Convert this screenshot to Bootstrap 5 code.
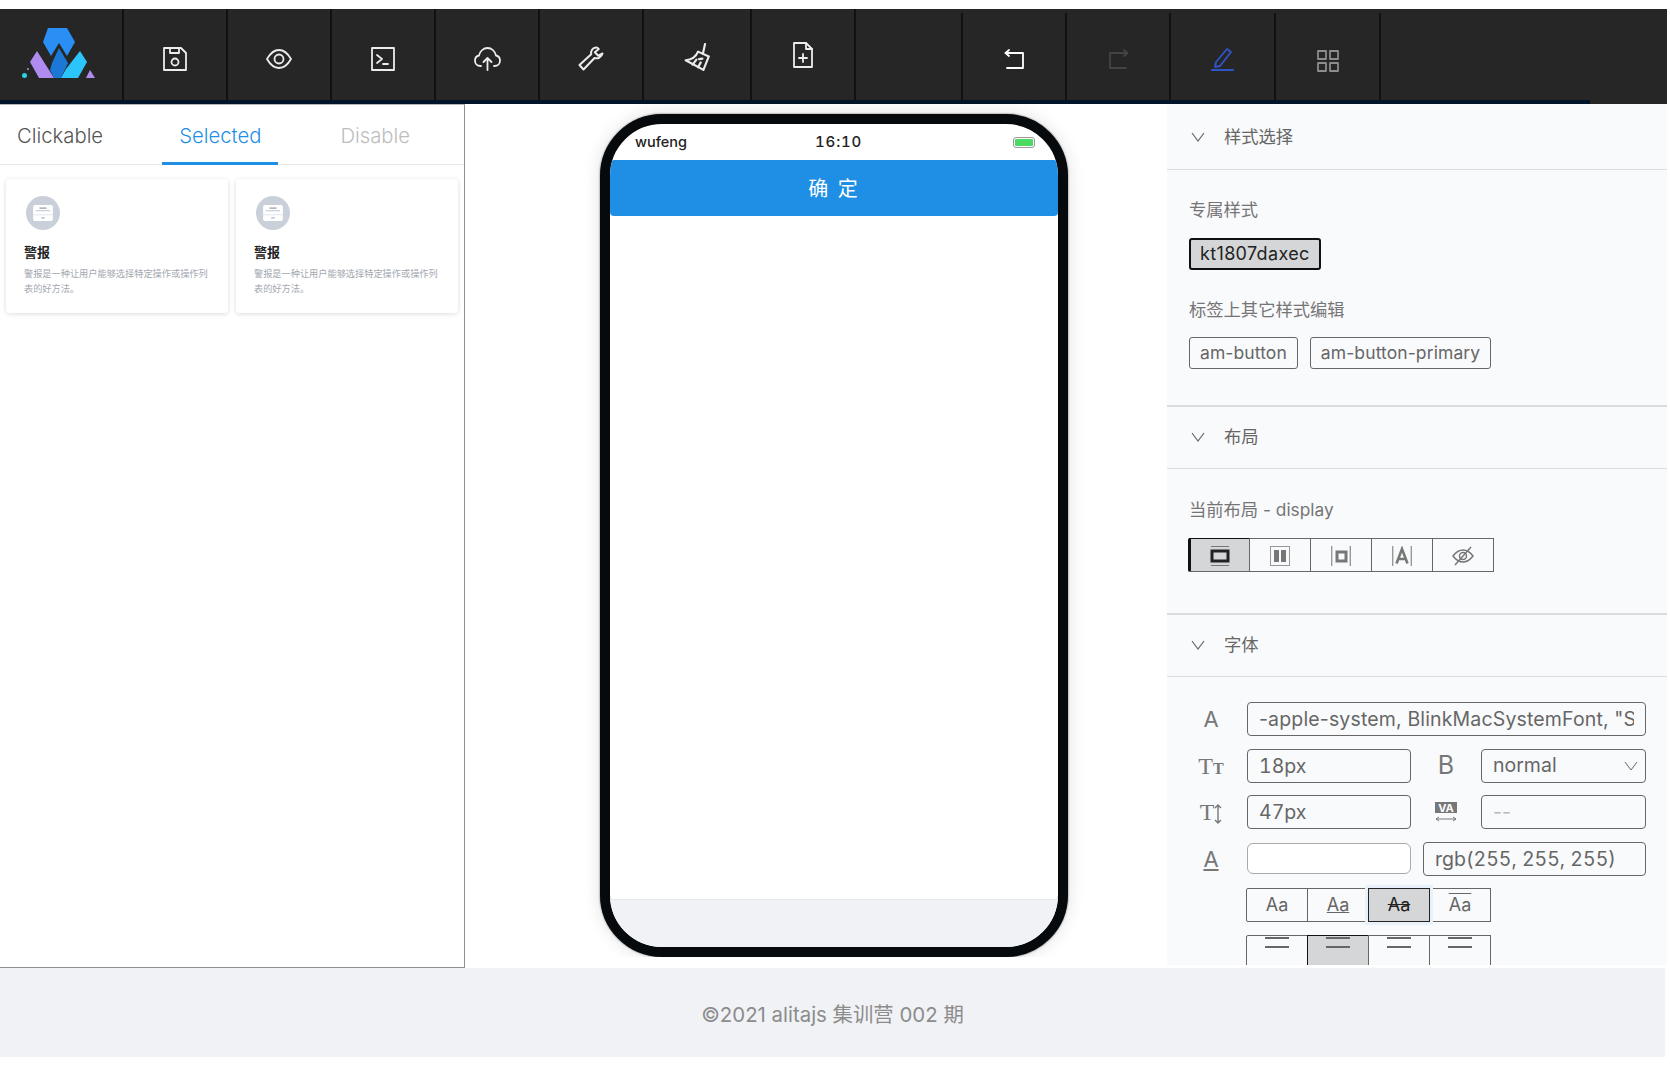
<!DOCTYPE html>
<html lang="zh">
<head>
  <meta charset="UTF-8">
  <title>alitajs 集训营</title>
  <meta name="viewport" content="width=device-width, initial-scale=1">
  <link href="https://cdn.jsdelivr.net/npm/bootstrap@5.3.3/dist/css/bootstrap.min.css" rel="stylesheet">
  <style>
    html, body { height: 100%; overflow: hidden; }
    body { background: #fff; font-family: Inter, "Noto Sans CJK SC", sans-serif; color: #666; padding-top: 9px; }

    /* toolbar */
    .tool-bar { width: 1667px; height: 95px; background: #262626; }
    .tool-row { height: 91px; }
    .tool-cell { width: 104px; border-right: 2px solid #111; padding-top: 8px; flex: none; }
    .tool-logo { width: 124px; padding: 0 5px 3px 0; }
    .tool-wide { width: 108px; }
    .tool-low { margin-top: 4px; padding-top: 5px; }
    .tool-gap { width: 107px; }
    .tool-big { width: 105px; }
    .tool-line { height: 4px; width: 1590px; background: #001529; }
    .ico { fill: none; stroke: #ececec; stroke-width: 1.8; stroke-linejoin: round; stroke-linecap: round; }

    /* body of the page */
    .work-area { width: 1667px; height: 864px; }
    .left-panel { width: 465px; border-right: 1px solid #8f8f8f; border-bottom: 1px solid #8f8f8f; border-top: 1px solid #b5b5b5; flex: none; }
    .tab-strip { height: 60px; border-bottom: 1px solid #e8e8e8; gap: 43px; }
    .tab-item { font-size: 20.3px; padding: 0 17px; height: 60px; line-height: 62px; color: #555; font-weight: 300; }
    .tab-on { color: #1f8fe6; border-bottom: 3px solid #1f8fe6; margin-left: -1px; }
    .tab-off { color: #bdbdbd; margin-left: 2px; }
    .comp-card { width: 222px; height: 134px; border: 0; border-radius: 4px; padding: 17px 18px; box-shadow: 0 1px 5px rgba(0,0,0,.14); }
    .comp-title { font-size: 13px; font-weight: 700; color: #222; line-height: 20px; margin-top: 12px; }
    .comp-text { font-size: 9.2px; color: #a3a8b0; line-height: 15px; margin-top: 4px; }

    /* phone */
    .canvas-area { width: 702px; flex: none; }
    .phone { width: 468px; height: 843px; margin: 10px 0 0 135px; border: 10px solid #060a0c; border-radius: 62px; overflow: hidden; box-shadow: 0 0 2px #555, 0 0 18px rgba(0,0,0,.12); clip-path: inset(-20px -20px 0 -20px); }
    .phone-status { height: 36px; padding: 0 23px 0 25px; font-size: 14.5px; font-weight: 500; color: #222; }
    .phone-time { margin-left: -23px; font-size: 15px; letter-spacing: .8px; font-variant-numeric: tabular-nums; }
    .phone-battery { width: 22px; height: 11px; padding: 1px; border: 1px solid #999; border-radius: 3px; background: #4cd964; background-clip: content-box; }
    .phone-btn { height: 56px; line-height: 58px; border-radius: 4px; background: #1f8fe6; color: #fff; font-size: 20px; letter-spacing: 2px; text-align: center; }
    .phone-foot { height: 48px; background: #f0f2f5; border-top: 1px solid #e6e8eb; }

    /* right panel */
    .prop-panel { width: 500px; background: #f9fafc; overflow: hidden; flex: none; height: 861px; }
    .prop-head { height: 66px; padding-top: 1px; font-size: 17.300px; color: #666; padding-left: 24px; border-bottom: 1px solid #dcdcdc; gap: 19px; }
    .prop-head-low { height: 62px; padding-top: 0; padding-bottom: 2px; }
    .prop-section { border-bottom: 2px solid #dcdcdc; }
    .prop-label { font-size: 17.300px; line-height: 24px; color: #757575; }
    .prop-body { padding: 29px 22px 0; }
    .prop-body-top { padding-top: 28px; }
    .tag-box { height: 32px; line-height: 29px; padding: 0 10px; font-size: 17.500px; border: 1px solid #666; border-radius: 3px; color: #666; letter-spacing: .1px; }
    .tag-on { background: #d5d6d8; border: 2px solid #111; line-height: 27px; color: #222; padding: 0 9px; font-size: 18px; letter-spacing: .35px; }
    .btn-group > .seg-btn { flex: none; }
    .seg-btn { width: 62px; height: 34px; padding: 0; border: 1px solid #666; border-radius: 0; color: #666; font-size: 18px; line-height: 30px; background: transparent; }
    .btn-group > .seg-first { border-radius: 2px 0 0 2px; }
    .seg-on, .seg-on:hover { background: #d5d6d8; color: #222; }
    .btn-group > .seg-first.seg-on { border-left: 3px solid #111; border-color: #111 #666 #666 #111; }
    .btn-group > .seg-glow { box-shadow: 0 0 0 3px #e9f2fb; border-color: #222; z-index: 1; }
    .seg-cut { height: 40px; }
    .font-ico { width: 62px; margin-right: 18px; padding-left: 26px; text-align: center; font-size: 22px; line-height: 1; color: #777; flex: none; }
    .font-serif { font-family: "Liberation Serif", serif; font-size: 24px; white-space: nowrap; }
    .font-serif span { font-size: 16px; font-weight: 700; }
    .font-mid { width: 70px; text-align: center; color: #777; flex: none; line-height: 1; }
    .font-input { height: 34px; padding: 0 11px; font-family: Inter, sans-serif; font-size: 19.500px; color: #666; background-color: transparent; border: 1.5px solid #666; border-radius: 4px; }
    .font-num { font-variant-numeric: tabular-nums; }
    .font-wide { letter-spacing: .15px; }
    .font-input:focus { color: #666; background-color: transparent; border-color: #666; box-shadow: none; }
    .font-select { background-image: url("data:image/svg+xml,%3csvg xmlns='http://www.w3.org/2000/svg' viewBox='0 0 14 10'%3e%3cpath fill='none' stroke='%23666' d='M1 1l6 8 6-8'/%3e%3c/svg%3e"); background-repeat: no-repeat; background-size: 14px 10px; background-position: right 7px center; }
    .font-swatch { height: 31px; background-color: #fff; border-color: #aaa; border-radius: 6px; }
    .font-ph::placeholder { color: #bbb; }

    .page-foot { width: 1665px; height: 89px; padding-top: 5px; background: #f0f2f5; color: #8c8c8c; font-size: 20.400px; }
  </style>
</head>
<body>
  <div class="tool-bar">
    <div class="tool-row d-flex">
      <div class="tool-cell tool-logo d-flex align-items-center justify-content-center">
        <svg width="76" height="54" viewBox="20 26 76 54">
          <path fill="#2a8ff5" d="M47 28h19l8 14-8 14-8-13-8 13-8-14z"/>
          <path fill="#b18cf0" d="M36 51l12 19 5 8H38l-9-16z"/>
          <path fill="#1c78d6" d="M58 48l9 15-7 15h-7l-4-8 2-7z"/>
          <path fill="#2cc5fb" d="M79 51l7 11-9 16H60l5-9z"/>
          <path fill="#b18cf0" d="M89 70l5 8H85z"/>
          <circle cx="23.500" cy="75.500" r="2.500" fill="#26d4e6"/>
          <circle cx="27" cy="69" r="1" fill="#b18cf0"/>
        </svg>
      </div>
      <div class="tool-cell d-flex align-items-center justify-content-center">
        <svg width="24" height="24" viewBox="0 0 24 24" class="ico"><path d="M1 1h17l5 5v17H1z"/><path d="M7 1v5h9V1"/><circle cx="12" cy="15" r="3.500"/></svg>
      </div>
      <div class="tool-cell d-flex align-items-center justify-content-center">
        <svg width="26" height="20" viewBox="0 0 26 20" class="ico"><path d="M1 10C5 3 9 1 13 1s8 2 12 9c-4 7-8 9-12 9s-8-2-12-9z"/><circle cx="13" cy="10" r="4.500"/></svg>
      </div>
      <div class="tool-cell d-flex align-items-center justify-content-center">
        <svg width="24" height="24" viewBox="0 0 24 24" class="ico"><path d="M1 1h22v22H1z"/><path d="M6 8l5 4-5 4M12 17h5"/></svg>
      </div>
      <div class="tool-cell d-flex align-items-center justify-content-center">
        <svg width="27" height="24" viewBox="0 0 27 24" class="ico"><path d="M7 19H6.500C3 19 1 16.500 1 13.500 1 11 2.800 9 5 8.500 6 4 9.500 1 13.500 1S21 4 22 8.500c2.200.5 4 2.500 4 5 0 3-2 5.500-5.500 5.500H20"/><path d="M13.500 23V11M9.500 15l4-4 4 4"/></svg>
      </div>
      <div class="tool-cell d-flex align-items-center justify-content-center">
        <svg width="26" height="25" viewBox="0 0 26 25" class="ico" style="stroke-width:2"><path d="M18 1.500c-3.500.3-5.500 3.500-4.800 6.800L1.500 19l4 4.500L16.500 12c3.300 1 7-.8 8-4.500l-4.200 2.200-3.500-3.500L20.800 3c-.8-1-1.800-1.600-2.800-1.500z"/></svg>
      </div>
      <div class="tool-cell tool-wide d-flex align-items-center justify-content-center">
        <svg width="27" height="28" viewBox="0 0 25 26" class="ico" style="margin-top:-3px;stroke-width:2"><path d="M13 8l10 4.500L18 25 1.500 16C7 15.500 11 13 13 8z"/><path d="M17.500 10l2-9M8 20l3.500-4.500M13 22.500l2.500-4.500M14 15l3-.5"/></svg>
      </div>
      <div class="tool-cell d-flex align-items-center justify-content-center">
        <svg width="20" height="26" viewBox="0 0 20 26" class="ico" style="margin-top:-7px"><path d="M1 1h12l6 6v18H1z"/><path d="M13 1v6h6M10 12v8M6 16h8"/></svg>
      </div>
      <div class="tool-cell tool-low tool-gap"></div>
      <div class="tool-cell tool-low d-flex align-items-center justify-content-center">
        <svg width="21" height="20" viewBox="0 0 21 20" class="ico" style="stroke:#fff"><path d="M2 4h17v15H3"/><path d="M5 1L1.500 4 5 7" stroke-linejoin="miter"/></svg>
      </div>
      <div class="tool-cell tool-low d-flex align-items-center justify-content-center">
        <svg width="21" height="20" viewBox="0 0 21 20" class="ico" style="stroke:#444"><path d="M19 4H2v15h16"/><path d="M16 1l3.500 3L16 7"/></svg>
      </div>
      <div class="tool-cell tool-low tool-big d-flex align-items-center justify-content-center">
        <svg width="24" height="24" viewBox="0 0 24 24" class="ico" style="stroke:#2f54c8"><path d="M16 2l4 3L9 19l-5 1 1-5z"/><path d="M1 23h21" stroke-width="2"/></svg>
      </div>
      <div class="tool-cell tool-low tool-big d-flex align-items-center justify-content-center">
        <svg width="22" height="22" viewBox="0 0 22 22" class="ico" style="stroke:#8c8c8c;margin-top:3px"><path d="M1 1h8v8H1zM13 1h8v8h-8zM1 13h8v8H1zM13 13h8v8h-8z"/></svg>
      </div>
    </div>
    <div class="tool-line"></div>
  </div>

  <div class="work-area d-flex">
    <div class="left-panel bg-white">
      <div class="tab-strip nav flex-nowrap">
        <div class="tab-item">Clickable</div>
        <div class="tab-item tab-on">Selected</div>
        <div class="tab-item tab-off">Disable</div>
      </div>
      <div class="d-flex gap-2" style="padding:14px 0 0 6px">
        <div class="card comp-card">
          <svg width="38" height="38" viewBox="0 0 38 38"><circle cx="19" cy="19" r="19" fill="#c9d0da"/><rect x="8" y="10" width="22" height="18" rx="2" fill="#fff"/><path d="M8 21h22" stroke="#dfe3e9"/><path d="M15 13.500h8" stroke="#6b7585"/><path d="M11 16.500h16" stroke="#b5bdc9"/><path d="M17 24.500h4" stroke="#8294c0"/></svg>
          <div class="comp-title">警报</div>
          <div class="comp-text">警报是一种让用户能够选择特定操作或操作列表的好方法。</div>
        </div>
        <div class="card comp-card">
          <svg width="38" height="38" viewBox="0 0 38 38"><circle cx="19" cy="19" r="19" fill="#c9d0da"/><rect x="8" y="10" width="22" height="18" rx="2" fill="#fff"/><path d="M8 21h22" stroke="#dfe3e9"/><path d="M15 13.500h8" stroke="#6b7585"/><path d="M11 16.500h16" stroke="#b5bdc9"/><path d="M17 24.500h4" stroke="#8294c0"/></svg>
          <div class="comp-title">警报</div>
          <div class="comp-text">警报是一种让用户能够选择特定操作或操作列表的好方法。</div>
        </div>
      </div>
    </div>

    <div class="canvas-area bg-white">
      <div class="phone d-flex flex-column bg-white">
        <div class="phone-status d-flex align-items-center justify-content-between">
          <span>wufeng</span>
          <span class="phone-time">16:10</span>
          <span class="phone-battery"></span>
        </div>
        <div class="phone-btn">确 定</div>
        <div class="flex-grow-1"></div>
        <div class="phone-foot"></div>
      </div>
    </div>

    <div class="prop-panel">
      <div class="prop-section" style="height:303px">
        <div class="prop-head d-flex align-items-center">
          <svg width="14" height="10" viewBox="0 0 14 10" fill="none" stroke="#666" stroke-width="1.200"><path d="M1 1l6 8 6-8"/></svg>
          <span>样式选择</span>
        </div>
        <div class="prop-body prop-body-top">
          <div class="prop-label">专属样式</div>
          <div class="d-flex mt-3"><div class="tag-box tag-on">kt1807daxec</div></div>
          <div class="prop-label" style="margin-top:28px">标签上其它样式编辑</div>
          <div class="d-flex" style="gap:12px;margin-top:15px"><div class="tag-box">am-button</div><div class="tag-box">am-button-primary</div></div>
        </div>
      </div>

      <div class="prop-section" style="height:208px">
        <div class="prop-head prop-head-low d-flex align-items-center">
          <svg width="14" height="10" viewBox="0 0 14 10" fill="none" stroke="#666" stroke-width="1.200"><path d="M1 1l6 8 6-8"/></svg>
          <span>布局</span>
        </div>
        <div class="prop-body">
          <div class="prop-label">当前布局 - display</div>
          <div class="btn-group d-flex mt-3" role="group" style="margin-left:-1px">
            <button class="btn seg-btn seg-first seg-on"><svg width="20" height="20" viewBox="0 0 20 20" fill="none" stroke="#222"><path d="M1 .5h18M1 19.500h18" stroke="#777"/><rect x="2" y="5" width="16" height="10" stroke-width="3"/></svg></button>
            <button class="btn seg-btn"><svg width="20" height="20" viewBox="0 0 20 20"><rect x=".5" y=".5" width="19" height="19" fill="none" stroke="#999"/><path d="M4 4h5v12H4zM11 4h5v12h-5z" fill="#777"/></svg></button>
            <button class="btn seg-btn"><svg width="20" height="20" viewBox="0 0 20 20" fill="none"><path d="M.7 0v20M19.300 0v20" stroke="#999" stroke-width="1.400"/><rect x="6" y="6" width="9" height="9" stroke="#777" stroke-width="3"/></svg></button>
            <button class="btn seg-btn"><svg width="20" height="20" viewBox="0 0 20 20" fill="none"><path d="M.7 0v20M19.300 0v20" stroke="#999" stroke-width="1.400"/><path d="M4.500 17.500L10 3l5.500 14.500M6.500 13h7" stroke="#777" stroke-width="2.600"/></svg></button>
            <button class="btn seg-btn"><svg width="22" height="20" viewBox="0 0 22 20" fill="none" stroke="#777" stroke-width="1.500"><path d="M1 10c3-4 6-6 10-6s7 2 10 6c-3 4-6 6-10 6s-7-2-10-6z"/><circle cx="11" cy="10" r="3.500"/><path d="M3 19L19 1"/></svg></button>
          </div>
        </div>
      </div>

      <div>
        <div class="prop-head prop-head-low d-flex align-items-center">
          <svg width="14" height="10" viewBox="0 0 14 10" fill="none" stroke="#666" stroke-width="1.200"><path d="M1 1l6 8 6-8"/></svg>
          <span>字体</span>
        </div>
        <div class="d-flex flex-column" style="width:479px;gap:12.500px;padding-top:25px">
          <div class="d-flex align-items-center">
            <div class="font-ico">A</div>
            <input class="form-control font-input font-wide flex-fill" value="-apple-system, BlinkMacSystemFont, &quot;Segoe UI&quot;, Roboto">
          </div>
          <div class="d-flex align-items-center">
            <div class="font-ico font-serif">T<span>T</span></div>
            <input class="form-control font-input font-num" style="width:164px" value="18px">
            <div class="font-mid" style="font-size:25px">B</div>
            <select class="form-select font-input font-select" style="width:165px"><option>normal</option></select>
          </div>
          <div class="d-flex align-items-center">
            <div class="font-ico font-serif">T<svg width="8" height="20" viewBox="0 0 8 20" fill="none" stroke="#777" stroke-width="1.400"><path d="M4 1v18M1 4l3-3 3 3M1 16l3 3 3-3"/></svg></div>
            <input class="form-control font-input font-num" style="width:164px" value="47px">
            <div class="font-mid"><svg width="22" height="20" viewBox="0 0 22 20"><rect width="22" height="11" fill="#777"/><text x="11" y="10" text-anchor="middle" font-size="11" font-weight="700" font-family="Inter, sans-serif" fill="#f9fafc">VA</text><path d="M1 17h20M1 17l3-2M1 17l3 2M21 17l-3-2M21 17l-3 2" fill="none" stroke="#777"/></svg></div>
            <input class="form-control font-input font-ph" style="width:165px" placeholder="--">
          </div>
          <div class="d-flex align-items-center">
            <div class="font-ico text-decoration-underline">A</div>
            <input class="form-control font-input font-swatch" style="width:164px">
            <input class="form-control font-input font-num" style="width:223px;margin-left:12px" value="rgb(255, 255, 255)">
          </div>
          <div class="btn-group d-flex" role="group" style="margin:0 0 0 79px">
            <button class="btn seg-btn seg-first">Aa</button>
            <button class="btn seg-btn text-decoration-underline">Aa</button>
            <button class="btn seg-btn seg-on seg-glow text-decoration-line-through">Aa</button>
            <button class="btn seg-btn" style="text-decoration:overline">Aa</button>
          </div>
          <div class="btn-group d-flex" role="group" style="margin-left:79px">
            <button class="btn seg-btn seg-cut seg-first d-flex justify-content-center"><svg width="24" height="14" viewBox="0 0 24 14" stroke="#666" stroke-width="2"><path d="M0 2h24M0 11h24"/></svg></button>
            <button class="btn seg-btn seg-cut seg-on d-flex justify-content-center" style="border-color:#111"><svg width="24" height="14" viewBox="0 0 24 14" stroke="#666" stroke-width="2"><path d="M0 2h24M0 11h24"/></svg></button>
            <button class="btn seg-btn seg-cut d-flex justify-content-center"><svg width="24" height="14" viewBox="0 0 24 14" stroke="#666" stroke-width="2"><path d="M0 2h24M0 11h24"/></svg></button>
            <button class="btn seg-btn seg-cut d-flex justify-content-center"><svg width="24" height="14" viewBox="0 0 24 14" stroke="#666" stroke-width="2"><path d="M0 2h24M0 11h24"/></svg></button>
          </div>
        </div>
      </div>
    </div>
  </div>

  <div class="page-foot d-flex align-items-center justify-content-center">©2021 alitajs 集训营 002 期</div>

  <script src="https://cdn.jsdelivr.net/npm/bootstrap@5.3.3/dist/js/bootstrap.bundle.min.js"></script>
</body>
</html>
